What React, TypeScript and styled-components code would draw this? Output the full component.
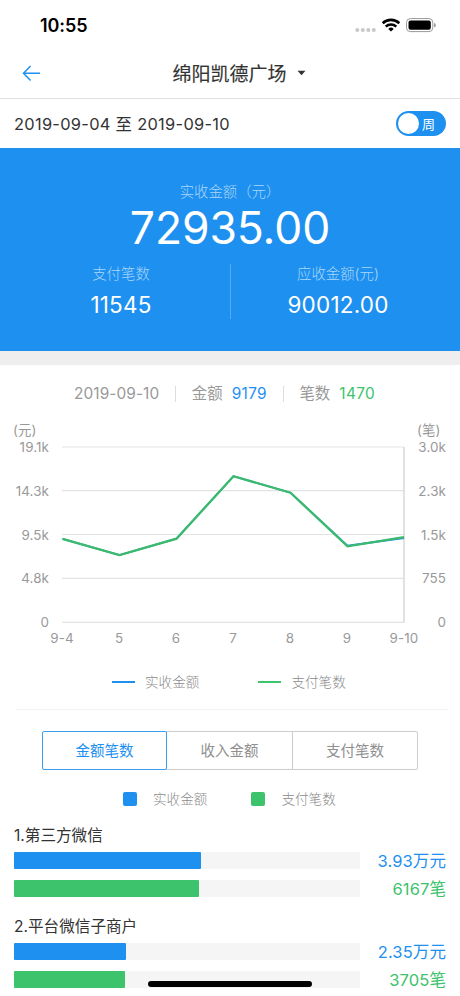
import React from "react";
import styled, { createGlobalStyle } from "styled-components";

const BLUE = "#1e90ef";
const GREEN = "#3cc36c";

const GlobalStyle = createGlobalStyle`
  * { box-sizing: border-box; }
  body {
    margin: 0;
    background: #fff;
    font-family: Inter, "Noto Sans CJK SC", sans-serif;
    -webkit-font-smoothing: antialiased;
  }
`;

const Screen = styled.main`
  position: relative;
  width: 460px;
  height: 996px;
  overflow: hidden;
  background: #fff;
  color: #333;
  white-space: nowrap;
`;

const StatusBar = styled.header`
  display: flex;
  justify-content: space-between;
  height: 48px;
  padding: 0 24px 0 40px;
`;

const Clock = styled.time`
  padding-top: 15px;
  font-size: 18px;
  line-height: 22px;
  font-weight: 600;
  letter-spacing: -0.1px;
  color: #000;
`;

const StatusIcons = styled.svg`
  width: 82px;
  height: 16px;
  margin-top: 17px;
`;

const NavBar = styled.nav`
  display: grid;
  grid-template-columns: 60px 1fr 60px;
  align-items: center;
  height: 51px;
  border-bottom: 1px solid #e1e1e1;
`;

const BackIcon = styled.svg`
  width: 20px;
  height: 18px;
  margin-left: 22px;
`;

const PlaceTitle = styled.h1`
  display: flex;
  align-items: center;
  justify-content: center;
  gap: 10px;
  margin: 0;
  padding-left: 18px;
  font-size: 19px;
  line-height: 26px;
  font-weight: 400;
  -webkit-text-stroke: 0.15px #333;

  span {
    padding-top: 4px;
  }
`;

const Caret = styled.svg`
  width: 9px;
  height: 6px;
`;

const DateRow = styled.section`
  display: flex;
  align-items: center;
  justify-content: space-between;
  height: 49px;
  padding: 0 14px;
`;

const DateRange = styled.div`
  font-size: 16.4px;
  line-height: 24px;
  letter-spacing: 0.3px;
`;

const PeriodSwitch = styled.button`
  display: flex;
  align-items: center;
  gap: 3px;
  width: 50px;
  height: 25px;
  padding: 0 2px;
  border: 0;
  border-radius: 13px;
  background: ${BLUE};
  color: #fff;
  font: 13px/20px Inter, "Noto Sans CJK SC", sans-serif;
`;

const Knob = styled.span`
  width: 21px;
  height: 21px;
  border-radius: 50%;
  background: #fff;
`;

const Summary = styled.section`
  height: 203px;
  padding-top: 34px;
  background: ${BLUE};
  color: #fff;
  text-align: center;
`;

const SummaryLabel = styled.div`
  font-size: 14.4px;
  line-height: 20px;
  font-weight: 300;
  color: #a9d6fb;
`;

const Total = styled.div`
  height: 48px;
  padding-top: 2px;
  font-size: 44.5px;
  line-height: 48px;
  font-weight: 400;
  letter-spacing: -0.1px;
`;

const SummaryColumns = styled.div`
  display: grid;
  grid-template-columns: 230px 230px;
  height: 54px;
  margin-top: 14px;
`;

const SummaryCell = styled.div<{ $divided?: boolean; $shift: number }>`
  padding-left: ${(p) => (p.$shift > 0 ? p.$shift : 0)}px;
  padding-right: ${(p) => (p.$shift < 0 ? -p.$shift : 0)}px;
  border-left: ${(p) => (p.$divided ? "1px solid #56acf4" : "0")};
`;

const CellValue = styled.div`
  margin-top: 7px;
  font-size: 22.5px;
  line-height: 28px;
  font-weight: 400;
  letter-spacing: 0.2px;
`;

const Gap = styled.div`
  height: 14px;
  background: #eee;
`;

const DayInfo = styled.div`
  display: flex;
  align-items: center;
  height: 24px;
  margin: 17px 0 9px;
  padding-left: 74px;
  font-size: 15.4px;
  color: #999;
`;

const InfoItem = styled.span<{ $color?: string }>`
  display: flex;
  gap: 9px;
  line-height: 24px;
  letter-spacing: 0.1px;

  b {
    font-weight: 400;
    letter-spacing: 0.3px;
    color: ${(p) => p.$color};
  }
`;

const InfoRule = styled.i`
  width: 1px;
  height: 16px;
  margin: 0 15.5px 0 16px;
  background: #ddd;
`;

const Chart = styled.svg`
  display: block;
  width: 460px;
  height: 250px;
  font-family: Inter, "Noto Sans CJK SC", sans-serif;
  font-size: 13.4px;
  letter-spacing: 0.1px;
  fill: #999;
`;

const LineLegend = styled.div`
  display: flex;
  align-items: center;
  height: 33px;
  gap: 59px;
  padding-left: 112px;
`;

const SquareLegend = styled(LineLegend)`
  height: 58px;
  gap: 44px;
  padding-left: 123px;
`;

const LegendItem = styled.span<{ $gap: number }>`
  display: flex;
  align-items: center;
  gap: ${(p) => p.$gap}px;
  font-size: 13.6px;
  line-height: 20px;
  font-weight: 300;
  color: #8c8c8c;
`;

const LineKey = styled.i<{ $color: string }>`
  width: 23px;
  height: 2px;
  background: ${(p) => p.$color};
`;

const SquareKey = styled.i<{ $color: string }>`
  width: 14px;
  height: 14px;
  border-radius: 2px;
  background: ${(p) => p.$color};
`;

const Divider = styled.hr`
  height: 1px;
  margin: 11px 12px 21px 16px;
  border: 0;
  background: #f3f3f3;
`;

const Tabs = styled.div`
  display: grid;
  grid-template-columns: 125px 126px 125px;
  height: 39px;
  width: 376px;
  margin-left: 42px;
`;

const Tab = styled.button<{ $active?: boolean }>`
  padding: 0;
  margin-left: ${(p) => (p.$active ? 0 : -1)}px;
  z-index: ${(p) => (p.$active ? 1 : 0)};
  border: 1px solid ${(p) => (p.$active ? "#3c9eee" : "#ccc")};
  border-radius: ${(p) => (p.$active ? "2px" : "0")};
  background: #fff;
  color: ${(p) => (p.$active ? BLUE : "#909090")};
  font: 400 14.5px/20px Inter, "Noto Sans CJK SC", sans-serif;

  &:last-child {
    border-radius: 0 2px 2px 0;
  }
`;

const Channel = styled.section`
  height: 91px;
`;

const ChannelName = styled.h2`
  margin: 0 0 8px;
  padding-left: 14px;
  font-size: 15.6px;
  line-height: 16px;
  font-weight: 400;
`;

const BarRow = styled.div<{ $color: string }>`
  display: flex;
  align-items: center;
  justify-content: space-between;
  height: 17px;
  margin-bottom: 11px;
  padding: 0 14px;
  color: ${(p) => p.$color};
  font-size: 16.5px;
  line-height: 17px;
  letter-spacing: 0.1px;
`;

const BarValue = styled.span`
  padding-top: 2px;
`;

const Track = styled.div`
  width: 346px;
  height: 17px;
  background: #f5f5f5;
`;

const Bar = styled.div<{ $color: string; $width: number }>`
  width: ${(p) => p.$width}px;
  height: 17px;
  border-radius: 1px;
  background: ${(p) => p.$color};
`;

const HomeIndicator = styled.div`
  position: absolute;
  left: 148px;
  bottom: 9px;
  width: 164px;
  height: 6px;
  border-radius: 3px;
  background: #000;
`;

const gridRows = [
  { y: 32, left: "19.1k", right: "3.0k" },
  { y: 75.7, left: "14.3k", right: "2.3k" },
  { y: 119.5, left: "9.5k", right: "1.5k" },
  { y: 163.3, left: "4.8k", right: "755" },
  { y: 207.3, left: "0", right: "0" },
];

const days = ["9-4", "5", "6", "7", "8", "9", "9-10"];

const channels = [
  { name: "1.第三方微信", bars: [[BLUE, 186.5, "3.93万元"], [GREEN, 184.5, "6167笔"]] },
  { name: "2.平台微信子商户", bars: [[BLUE, 111.5, "2.35万元"], [GREEN, 110.5, "3705笔"]] },
] as { name: string; bars: [string, number, string][] }[];

function TrendChart() {
  return (
    <Chart viewBox="0 0 460 250">
      <text x="13" y="20">(元)</text>
      <text x="417" y="20">(笔)</text>
      {gridRows.map((r) => (
        <g key={r.y}>
          <path d={`M62 ${r.y}H404`} stroke="#e3e3e3" strokeWidth="1.2" />
          <text x="49" y={r.y + 5} textAnchor="end">{r.left}</text>
          <text x="446" y={r.y + 5} textAnchor="end">{r.right}</text>
        </g>
      ))}
      <path d="M404 32V207.5" stroke="#d8d8d8" strokeWidth="1.5" />
      {days.map((d, i) => (
        <text key={d} x={62 + i * 57} y="228" textAnchor="middle">{d}</text>
      ))}
      <g fill="none">
        <path d="M62.5 123.9L119.5 140L176.5 123.7L233.5 61.2L290.5 77.7L347.5 130.7L404 123" stroke={BLUE} strokeWidth="1.8" />
        <path d="M62.5 123.9L119.5 140L176.5 123.7L233.5 61.2L290.5 77.7L347.5 131.3L404 122.2" stroke="#3cba6c" strokeWidth="2.3" />
      </g>
    </Chart>
  );
}

export default function App() {
  return (
    <>
      <GlobalStyle />
      <Screen>
        <StatusBar>
          <Clock>10:55</Clock>
          <StatusIcons viewBox="0 0 82 16">
            <g fill="#c8c8c8">
              <circle cx="3.3" cy="13" r="2" />
              <circle cx="8.8" cy="13" r="2" />
              <circle cx="14.3" cy="13" r="2" />
              <circle cx="19.8" cy="13" r="2" />
            </g>
            <g fill="none" stroke="#000" strokeWidth="2.6">
              <path d="M28.7 6.2a12 12 0 0 1 16.6 0" />
              <path d="M31.7 9.6a7.7 7.7 0 0 1 10.6 0" />
            </g>
            <path d="M37 14.6L34.3 11.9a3.9 3.9 0 0 1 5.4 0Z" fill="#000" />
            <rect x="52.5" y="1.6" width="26.3" height="13" rx="3.8" fill="#fff" stroke="#999" strokeWidth="1" />
            <rect x="54.5" y="3.5" width="22.3" height="9.3" rx="2" fill="#000" />
            <path d="M80.2 6v4.4q1.5-.6 1.5-2.2T80.2 6Z" fill="#888" />
          </StatusIcons>
        </StatusBar>
        <NavBar>
          <BackIcon viewBox="0 0 20 18" fill="none" stroke={BLUE} strokeWidth="1.5">
            <path d="M18 9.3H1.5M8.6 2L1.5 9.3l7.1 7.2" />
          </BackIcon>
          <PlaceTitle>
            <span>绵阳凯德广场</span>
            <Caret viewBox="0 0 9 6"><path d="M.5 .7h8L4.5 5.2Z" fill="#333" /></Caret>
          </PlaceTitle>
        </NavBar>
        <DateRow>
          <DateRange>2019-09-04 至 2019-09-10</DateRange>
          <PeriodSwitch><Knob />周</PeriodSwitch>
        </DateRow>
        <Summary>
          <SummaryLabel>实收金额（元）</SummaryLabel>
          <Total>72935.00</Total>
          <SummaryColumns>
            <SummaryCell $shift={12}>
              <SummaryLabel>支付笔数</SummaryLabel>
              <CellValue>11545</CellValue>
            </SummaryCell>
            <SummaryCell $divided $shift={-15}>
              <SummaryLabel>应收金额(元)</SummaryLabel>
              <CellValue>90012.00</CellValue>
            </SummaryCell>
          </SummaryColumns>
        </Summary>
        <Gap />
        <DayInfo>
          <InfoItem>2019-09-10</InfoItem>
          <InfoRule />
          <InfoItem $color={BLUE}>金额<b>9179</b></InfoItem>
          <InfoRule />
          <InfoItem $color={GREEN}>笔数<b>1470</b></InfoItem>
        </DayInfo>
        <TrendChart />
        <LineLegend>
          <LegendItem $gap={10}><LineKey $color={BLUE} />实收金额</LegendItem>
          <LegendItem $gap={10}><LineKey $color={GREEN} />支付笔数</LegendItem>
        </LineLegend>
        <Divider />
        <Tabs>
          <Tab $active>金额笔数</Tab>
          <Tab>收入金额</Tab>
          <Tab>支付笔数</Tab>
        </Tabs>
        <SquareLegend>
          <LegendItem $gap={16}><SquareKey $color={BLUE} />实收金额</LegendItem>
          <LegendItem $gap={16}><SquareKey $color={GREEN} />支付笔数</LegendItem>
        </SquareLegend>
        {channels.map((c) => (
          <Channel key={c.name}>
            <ChannelName>{c.name}</ChannelName>
            {c.bars.map(([color, width, value]) => (
              <BarRow key={value} $color={color}>
                <Track><Bar $color={color} $width={width} /></Track>
                <BarValue>{value}</BarValue>
              </BarRow>
            ))}
          </Channel>
        ))}
        <HomeIndicator />
      </Screen>
    </>
  );
}
